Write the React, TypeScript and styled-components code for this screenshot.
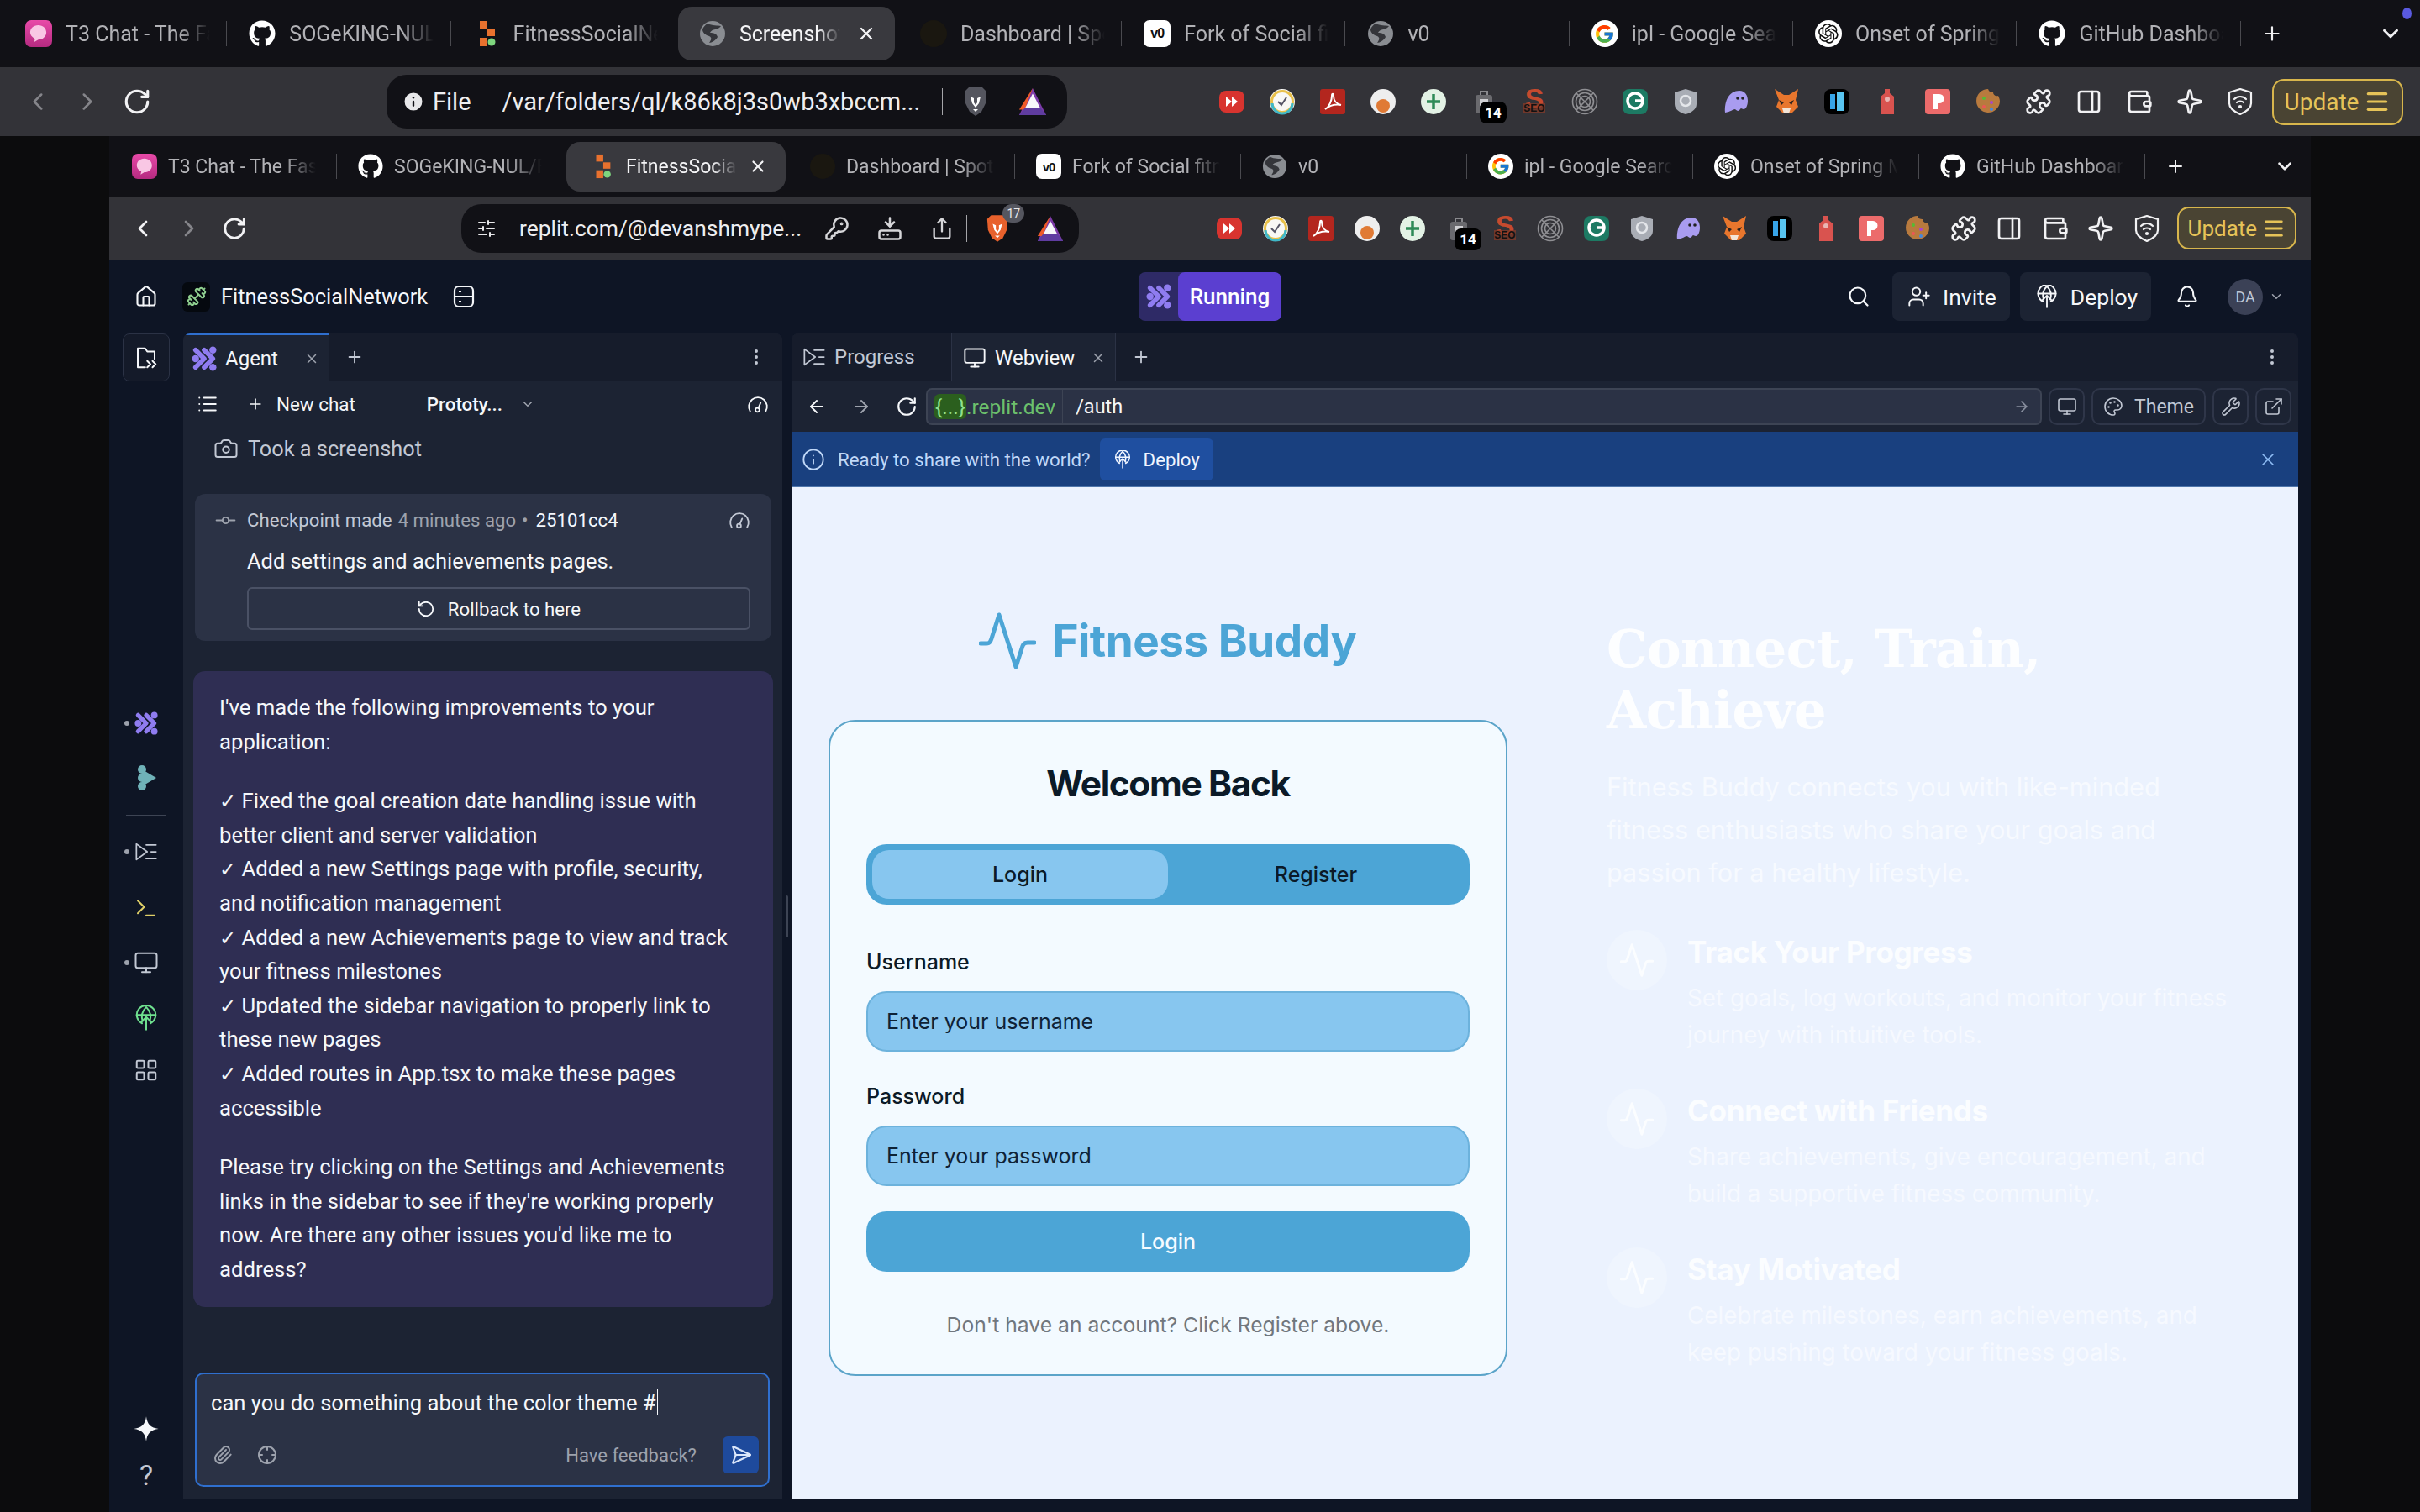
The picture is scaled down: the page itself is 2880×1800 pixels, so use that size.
import React from 'react';
import styled, { createGlobalStyle } from 'styled-components';
import {
  ArrowLeft, ArrowRight, Camera, ChevronDown, ChevronLeft, ChevronRight, Dumbbell, EllipsisVertical,
  ExternalLink, GitCommitHorizontal, HardDriveDownload, Home, Info, KeyRound, LayoutGrid, List, Menu,
  Monitor, Palette, PanelRight, Paperclip, Plus, Puzzle, RotateCcw, RotateCw, Search, SendHorizontal, Share,
  SlidersHorizontal, Sparkle, Terminal, UserPlus, Wallet, Wrench, X, Bell, Crosshair,
} from 'lucide-react';
import { FaGithub } from 'react-icons/fa';
import { FcGoogle } from 'react-icons/fc';
import { SiOpenai } from 'react-icons/si';

const UI_FONT = `Roboto, 'Noto Sans', sans-serif`;
const APP_FONT = `Inter, 'Liberation Sans', sans-serif`;

const GlobalStyle = createGlobalStyle`
  html, body { margin: 0; padding: 0; background: #0c0c0d; }
  * { box-sizing: border-box; }
`;

const Page = styled.div`
  width: 2880px;
  height: 1800px;
  overflow: hidden;
  display: flex;
  flex-direction: column;
  background: #0c0c0d;
  font-family: ${UI_FONT};
  color: #f5f7fa;
`;

/* ---- browser chrome ---- */

const TabStrip = styled.div<{ $nested?: boolean }>`
  display: flex;
  align-items: center;
  flex: none;
  height: ${(p) => (p.$nested ? 72 : 80)}px;
  padding-left: ${(p) => (p.$nested ? 2 : 4)}px;
  background: #111116;
`;

const TabCell = styled.div<{ $nested?: boolean; $active?: boolean; $noSep?: boolean }>`
  position: relative;
  flex: none;
  display: flex;
  align-items: center;
  width: ${(p) => (p.$nested ? 269 : 266.3)}px;
  height: ${(p) => (p.$nested ? 59 : 64)}px;
  padding-left: ${(p) => (p.$nested ? 25 : 26)}px;
  gap: ${(p) => (p.$nested ? 13 : 16)}px;
  border-radius: 16px;
  ${(p) => p.$active && `
    background: #39393e;
    margin: 0 4px;
    width: ${p.$nested ? 261 : 258}px;
    padding-left: ${p.$nested ? 28 : 25}px;
  `}
  ${(p) => !p.$active && !p.$noSep && `
    &::after {
      content: '';
      position: absolute;
      right: 0;
      top: 50%;
      height: 30px;
      margin-top: -15px;
      border-right: 1px solid #4a4a4f;
    }
  `}
`;

const TabTitle = styled.span<{ $nested?: boolean; $active?: boolean }>`
  flex: none;
  width: ${(p) => (p.$active ? (p.$nested ? 132 : 120) : p.$nested ? 176 : 172)}px;
  overflow: hidden;
  white-space: nowrap;
  font-family: ${UI_FONT};
  font-size: ${(p) => (p.$nested ? 23 : 25)}px;
  color: ${(p) => (p.$active ? '#f4f4f6' : '#b2b2b6')};
  mask-image: linear-gradient(90deg, #000 78%, transparent 100%);
`;

const TabClose = styled.span`
  position: absolute;
  right: 22px;
  top: 50%;
  transform: translateY(-50%);
  display: flex;
  color: #f4f4f6;
`;

const Favicon = styled.span<{ $size: number; $bg?: string; $round?: boolean }>`
  flex: none;
  display: flex;
  align-items: center;
  justify-content: center;
  width: ${(p) => p.$size}px;
  height: ${(p) => p.$size}px;
  border-radius: ${(p) => (p.$round ? '50%' : '7px')};
  background: ${(p) => p.$bg ?? 'transparent'};
  overflow: hidden;
`;

const V0Mark = styled.span<{ $size: number }>`
  font-family: 'Liberation Sans', sans-serif;
  font-weight: 700;
  font-size: ${(p) => p.$size * 0.5}px;
  color: #111;
  letter-spacing: -1px;
`;

const StripEnd = styled.div<{ $nested?: boolean }>`
  flex: 1;
  position: relative;
  display: flex;
  align-items: center;
  justify-content: space-between;
  padding: 0 ${(p) => (p.$nested ? 18 : 20)}px 0 24px;
  color: #f0f0f2;
`;

const ProfileDot = styled.span`
  position: absolute;
  right: 10px;
  top: -16px;
  width: 11px;
  height: 14px;
  border-radius: 50%;
  background: #5a5ae0;
`;

const NavBar = styled.div<{ $nested?: boolean }>`
  flex: none;
  display: flex;
  align-items: center;
  height: ${(p) => (p.$nested ? 75 : 82)}px;
  background: #333338;
  padding-left: ${(p) => (p.$nested ? 24 : 28)}px;
`;

const NavButtons = styled.div<{ $nested?: boolean }>`
  display: flex;
  align-items: center;
  gap: ${(p) => (p.$nested ? 23 : 25)}px;
  width: ${(p) => (p.$nested ? 395 : 432)}px;
`;

const NavIcon = styled.span<{ $dim?: boolean }>`
  display: flex;
  color: ${(p) => (p.$dim ? '#85858a' : '#f2f2f4')};
`;

const AddressBar = styled.div<{ $nested?: boolean }>`
  flex: none;
  display: flex;
  align-items: center;
  width: ${(p) => (p.$nested ? 735 : 810)}px;
  height: ${(p) => (p.$nested ? 58 : 64)}px;
  margin-right: ${(p) => (p.$nested ? 163 : 180)}px;
  padding-left: 18px;
  border-radius: 24px;
  background: #111116;
  color: #e8e8ea;
`;

const AddressText = styled.span<{ $ml?: number; $nested?: boolean }>`
  flex: none;
  margin-left: ${(p) => p.$ml ?? 0}px;
  white-space: nowrap;
  font-size: ${(p) => (p.$nested ? 26.4 : 29)}px;
  font-family: ${UI_FONT};
  color: #eeeef0;
`;

const AddressDivider = styled.span<{ $ml: number }>`
  flex: none;
  height: 32px;
  margin-left: ${(p) => p.$ml}px;
  border-left: 1px solid #a5a5a9;
`;

const AddressSlot = styled.span<{ $ml: number }>`
  position: relative;
  flex: none;
  display: flex;
  margin-left: ${(p) => p.$ml}px;
  color: #d6d6d9;
`;

const ShieldBadge = styled.span`
  position: absolute;
  top: -12px;
  right: -18px;
  width: 26px;
  height: 22px;
  border-radius: 11px;
  background: #55565f;
  color: #e8e8ea;
  font-size: 14px;
  text-align: center;
  line-height: 22px;
`;

const Extensions = styled.div<{ $nested?: boolean }>`
  flex: none;
  display: flex;
  align-items: center;
  gap: ${(p) => (p.$nested ? 22.6 : 28)}px;
`;

const ExtSlot = styled.span`
  position: relative;
  flex: none;
  display: flex;
  width: 32px;
  height: 32px;
  align-items: center;
  justify-content: center;
  color: #f2f2f4;
`;

const CountBadge = styled.span`
  position: absolute;
  left: 11px;
  top: 16px;
  width: 32px;
  height: 26px;
  border-radius: 8px;
  background: #000;
  color: #fff;
  font-size: 17px;
  font-weight: 700;
  text-align: center;
  line-height: 26px;
`;

const UpdateButton = styled.div<{ $nested?: boolean }>`
  flex: none;
  display: flex;
  align-items: center;
  justify-content: center;
  gap: 6px;
  width: ${(p) => (p.$nested ? 142 : 156)}px;
  height: ${(p) => (p.$nested ? 51 : 55)}px;
  margin-left: ${(p) => (p.$nested ? 20 : 22)}px;
  border: 2px solid #d8b64c;
  border-radius: 14px;
  background: #4a4433;
  color: #e6c358;
  font-size: ${(p) => (p.$nested ? 26 : 28)}px;
`;

/* ---- nested browser frame ---- */

const Frame = styled.div`
  flex: 1;
  min-height: 0;
  display: flex;
  flex-direction: column;
  margin: 0 130px;
  background: #0e1525;
`;

/* ---- replit header ---- */

const Header = styled.header`
  flex: none;
  display: flex;
  align-items: center;
  height: 88px;
  padding-left: 30px;
  background: #0e1525;
`;

const HeaderLeft = styled.div`
  display: flex;
  align-items: center;
  width: 1195px;
`;

const ReplIcon = styled.span`
  flex: none;
  display: flex;
  align-items: center;
  justify-content: center;
  width: 33px;
  height: 35px;
  margin-left: 29px;
  border-radius: 6px;
  background: #05090f;
`;

const ReplName = styled.span`
  margin: 0 30px 0 13px;
  font-size: 25.4px;
  color: #f5f7fa;
  white-space: nowrap;
`;

const RunGroup = styled.div`
  flex: none;
  display: flex;
  height: 58px;
  border-radius: 8px;
  overflow: hidden;
  background: #2e2a66;
`;

const RunIcon = styled.span`
  display: flex;
  align-items: center;
  justify-content: center;
  width: 47px;
`;

const RunLabel = styled.span`
  display: flex;
  align-items: center;
  justify-content: center;
  width: 123px;
  border-radius: 8px;
  background: #5b3fd0;
  font-size: 26px;
  font-weight: 500;
  color: #fff;
`;

const HeaderRight = styled.div`
  flex: 1;
  display: flex;
  align-items: center;
  padding-left: 673px;
  color: #f5f7fa;
`;

const HeaderButton = styled.div<{ $ml?: number }>`
  display: flex;
  align-items: center;
  gap: 14px;
  height: 58px;
  margin: 0 12px 0 ${(p) => p.$ml ?? 0}px;
  padding: 0 16px 0 18px;
  border-radius: 8px;
  background: #1c2333;
  font-size: 26.5px;
  color: #f5f7fa;
`;

const BellSlot = styled.span`
  display: flex;
  margin-left: 17px;
`;

const Avatar = styled.span`
  display: flex;
  align-items: center;
  justify-content: center;
  width: 42px;
  height: 43px;
  margin: 0 7px 0 34px;
  border-radius: 50%;
  background: #3b4156;
  color: #c2c8d4;
  font-size: 18px;
`;

/* ---- workspace ---- */

const Workspace = styled.div`
  flex: 1;
  min-height: 0;
  display: grid;
  grid-template-columns: 88px 713px 11px 1793px;
  padding: 0 15px 15px 0;
`;

const Rail = styled.nav`
  display: flex;
  flex-direction: column;
  align-items: center;
`;

const RailTop = styled.span`
  display: flex;
  align-items: center;
  justify-content: center;
  width: 56px;
  height: 57px;
  margin-bottom: 387px;
  border-radius: 8px;
  border: 1px solid #2b3245;
  background: #141a29;
  color: #f5f7fa;
`;

const RailItem = styled.span<{ $gapTop?: number; $dot?: boolean; $color?: string }>`
  position: relative;
  display: flex;
  align-items: center;
  justify-content: center;
  width: 40px;
  height: 40px;
  margin-top: ${(p) => p.$gapTop ?? 0}px;
  color: ${(p) => p.$color ?? '#c2c8d4'};
  ${(p) => p.$dot && `
    &::before {
      content: '';
      position: absolute;
      left: -6px;
      top: 17px;
      width: 6px;
      height: 6px;
      border-radius: 50%;
      background: #9da2ad;
    }
  `}
`;

const RailRule = styled.span`
  width: 48px;
  margin-top: 24px;
  border-top: 1px solid #3d4454;
`;

const RailBottom = styled.div`
  margin-top: auto;
  display: flex;
  flex-direction: column;
  align-items: center;
  gap: 19px;
  padding-bottom: 9px;
  color: #f5f7fa;
`;

const HelpMark = styled.span`
  font-size: 34px;
  color: #c2c8d4;
  font-family: ${UI_FONT};
`;

const Panel = styled.section`
  display: flex;
  flex-direction: column;
  min-height: 0;
  overflow: hidden;
  border-radius: 8px 8px 0 0;
  background: #1c2333;
`;

const PanelTabs = styled.div`
  flex: none;
  display: flex;
  align-items: stretch;
  height: 57px;
  background: #161c2b;
  border-bottom: 1px solid #2b3245;
`;

const PanelTab = styled.div<{ $width: number; $active?: boolean; $pl: number; $accent?: boolean }>`
  position: relative;
  flex: none;
  display: flex;
  align-items: center;
  gap: 10px;
  width: ${(p) => p.$width}px;
  padding-left: ${(p) => p.$pl}px;
  margin-bottom: ${(p) => (p.$active ? -1 : 0)}px;
  background: ${(p) => (p.$active ? '#1c2333' : 'transparent')};
  border-right: 1px solid #2b3245;
  border-top: ${(p) => (p.$accent ? '2px solid #2f6fcf' : 'none')};
  font-size: 24px;
  color: ${(p) => (p.$active ? '#f5f7fa' : '#c2c8d4')};
`;

const TabX = styled.span`
  position: absolute;
  right: 11px;
  top: 50%;
  transform: translateY(-50%);
  display: flex;
  color: #9da2ad;
`;

const PanelTabTail = styled.div`
  flex: 1;
  display: flex;
  align-items: center;
  justify-content: space-between;
  padding: 0 19px;
  color: #c2c8d4;
`;

const ChatToolbar = styled.div`
  flex: none;
  display: flex;
  align-items: center;
  height: 54px;
  padding: 0 16px;
  font-size: 22.4px;
  color: #f5f7fa;
`;

const ModePicker = styled.span`
  display: flex;
  align-items: center;
  gap: 21px;
  margin-left: 85px;
  font-weight: 500;
`;

const ToolbarEnd = styled.span`
  margin-left: auto;
  display: flex;
`;

const NewChat = styled.span`
  display: flex;
  align-items: center;
  gap: 15px;
  margin-left: 34px;
`;

const ActionLine = styled.div`
  flex: none;
  display: flex;
  align-items: center;
  gap: 11px;
  height: 52px;
  margin-bottom: 28px;
  padding-left: 36px;
  font-size: 25.3px;
  color: #c2c8d4;
`;

const Checkpoint = styled.div`
  flex: none;
  display: flex;
  flex-direction: column;
  height: 175px;
  margin: 0 13px 0 14px;
  padding: 14px 25px 0 22px;
  border-radius: 12px;
  background: #2b3245;
`;

const CheckpointHead = styled.div`
  display: flex;
  align-items: center;
  gap: 9px;
  height: 34px;
  font-size: 22.2px;
  color: #c2c8d4;
`;

const CommitIcon = styled.span`
  display: flex;
  margin-right: 2px;
  color: #9da2ad;
`;

const Faint = styled.span`
  margin-left: -2px;
  color: #9da2ad;
`;

const CommitId = styled.span`
  color: #f5f7fa;
`;

const CheckpointNote = styled.div`
  margin: 14px 0 0 40px;
  font-size: 25.4px;
  line-height: 36px;
  color: #f5f7fa;
`;

const RollbackButton = styled.div`
  display: flex;
  align-items: center;
  justify-content: center;
  gap: 15px;
  height: 51px;
  margin: 13px 0 0 40px;
  border: 2px solid #4a5165;
  border-radius: 6px;
  font-size: 22.2px;
  color: #f5f7fa;
`;

const AgentMessage = styled.div`
  flex: none;
  margin: 36px 11px 0 12px;
  padding: 23px 44px 25px 31px;
  height: 757px;
  border-radius: 14px;
  background: #2f2e53;
  font-size: 25.7px;
  line-height: 40.6px;
  color: #f5f7fa;
`;

const MessagePara = styled.p`
  margin: 0 0 30px;
  &:last-child { margin-bottom: 0; }
`;

const CheckMark = styled.span`
  font-family: 'DejaVu Sans', sans-serif;
  font-size: 24px;
  font-weight: 700;
  line-height: 0;
`;

const Composer = styled.div`
  flex: none;
  display: flex;
  flex-direction: column;
  height: 136px;
  margin: 78px 15px 0 14px;
  padding: 18px 11px 14px 17px;
  border: 2px solid #2f6fcf;
  border-radius: 10px;
  background: #2b3245;
  font-size: 25.6px;
  color: #f5f7fa;
`;

const Caret = styled.span`
  display: inline-block;
  width: 1px;
  height: 30px;
  margin-left: 1px;
  vertical-align: -5px;
  background: #f5f7fa;
`;

const ComposerFoot = styled.div`
  margin-top: auto;
  display: flex;
  align-items: center;
  gap: 29px;
  padding-left: 2px;
  color: #9da2ad;
`;

const Feedback = styled.span`
  margin-left: auto;
  font-size: 22px;
  color: #9da2ad;
`;

const SendButton = styled.span`
  display: flex;
  align-items: center;
  justify-content: center;
  width: 43px;
  height: 44px;
  margin-left: 2px;
  border-radius: 6px;
  background: #1e4a9c;
  color: #dbe7fb;
`;

const Splitter = styled.div`
  display: flex;
  align-items: center;
  padding-left: 4px;
  &::before {
    content: '';
    width: 3px;
    height: 50px;
    border-radius: 2px;
    background: #3d4454;
  }
`;

/* ---- webview ---- */

const UrlRow = styled.div`
  flex: none;
  display: flex;
  align-items: center;
  height: 60px;
  padding: 0 8px 0 18px;
  background: #1c2333;
  color: #f5f7fa;
`;

const UrlNav = styled.div`
  display: flex;
  align-items: center;
  gap: 29px;
  width: 142px;
`;

const UrlBox = styled.div`
  flex: none;
  display: flex;
  align-items: center;
  width: 1328px;
  height: 44px;
  padding-left: 8px;
  border: 2px solid #3d4454;
  border-radius: 7px;
  background: #2b3245;
  font-size: 24.5px;
`;

const UrlHost = styled.span`
  display: flex;
  align-items: center;
  height: 100%;
  padding-right: 8px;
  border-right: 1px solid #3d4454;
  color: #6cc06c;
`;

const HostBadge = styled.span`
  display: flex;
  align-items: center;
  height: 30px;
  padding: 0 1px;
  border-radius: 6px;
  background: #2b5f1e;
  color: #8fe08f;
`;

const UrlPath = styled.span`
  margin-left: 15px;
  font-size: 23.5px;
  color: #f5f7fa;
`;

const UrlGo = styled.span`
  margin-left: auto;
  margin-right: 12px;
  display: flex;
  color: #8a90a0;
`;

const ToolButton = styled.span`
  flex: none;
  display: flex;
  align-items: center;
  justify-content: center;
  gap: 13px;
  width: 43px;
  height: 44px;
  margin-left: 8px;
  border: 2px solid #2f3649;
  border-radius: 10px;
  background: #1c2333;
  color: #c2c8d4;
  font-size: 23px;
`;

const ThemeButton = styled(ToolButton)`
  width: 136px;
`;

const Banner = styled.div`
  flex: none;
  display: flex;
  align-items: center;
  height: 66px;
  padding: 0 24px 0 12px;
  background: #19407f;
  border-bottom: 1px solid #4f76ab;
  color: #c0d8f8;
  font-size: 22.2px;
`;

const BannerDeploy = styled.span`
  display: flex;
  align-items: center;
  gap: 14px;
  height: 50px;
  margin-left: 11px;
  padding: 0 16px;
  border-radius: 6px;
  background: #1f4fa0;
  color: #f0f5ff;
`;

const BannerText = styled.span`
  margin-left: 15px;
`;

const BannerClose = styled.span`
  margin-left: auto;
  display: flex;
  color: #8fbdf5;
`;

const Preview = styled.div`
  flex: 1;
  min-height: 0;
  display: flex;
  padding: 0 0 0 44px;
  background: #ebf2fe;
  font-family: ${APP_FONT};
`;

const LoginColumn = styled.div`
  flex: none;
  display: flex;
  flex-direction: column;
  width: 808px;
`;

const Brand = styled.div`
  display: flex;
  align-items: center;
  justify-content: center;
  gap: 19px;
  height: 68px;
  margin: 149px 0 60px;
  color: #4ca5d6;
`;

const BrandName = styled.span`
  font-size: 53px;
  font-weight: 700;
  letter-spacing: -0.5px;
  white-space: nowrap;
  color: #4ca5d6;
`;

const Card = styled.div`
  display: flex;
  flex-direction: column;
  height: 781px;
  padding: 0 43px;
  border: 2px solid #5ba4c9;
  border-radius: 32px;
  background: #f3faff;
  color: #0b1a28;
`;

const CardTitle = styled.h2`
  margin: 47px 0 0;
  height: 54px;
  line-height: 54px;
  text-align: center;
  font-size: 42.5px;
  font-weight: 700;
  letter-spacing: -1.4px;
`;

const Segments = styled.div`
  display: grid;
  grid-template-columns: 1fr 1fr;
  height: 72px;
  margin-top: 45px;
  padding: 7px;
  border-radius: 24px;
  background: #4ca5d6;
`;

const Segment = styled.div<{ $active?: boolean }>`
  display: flex;
  align-items: center;
  justify-content: center;
  border-radius: 20px;
  background: ${(p) => (p.$active ? '#87c6ef' : 'transparent')};
  font-size: 25px;
  font-weight: 500;
  color: #0b1a28;
`;

const FieldLabel = styled.label<{ $mt: number }>`
  display: block;
  margin-top: ${(p) => p.$mt}px;
  height: 35px;
  line-height: 35px;
  font-size: 25px;
  font-weight: 500;
`;

const FieldInput = styled.div`
  display: flex;
  align-items: center;
  height: 72px;
  margin-top: 17px;
  padding-left: 22px;
  border: 2px solid #6cb2dc;
  border-radius: 24px;
  background: #87c6ef;
  font-size: 25px;
  color: #0e2236;
`;

const SubmitButton = styled.div`
  display: flex;
  align-items: center;
  justify-content: center;
  height: 72px;
  margin-top: 30px;
  border-radius: 24px;
  background: #4ca5d6;
  color: #f5fbff;
  font-size: 25px;
  font-weight: 500;
`;

const CardFoot = styled.p`
  margin: 45px 0 0;
  text-align: center;
  font-size: 24.7px;
  line-height: 36px;
  color: #71777e;
`;

const Hero = styled.div`
  flex: none;
  width: 800px;
  margin-left: 118px;
  padding-top: 156px;
  color: #fafcff;
`;

const HeroTitle = styled.h1`
  margin: 0;
  width: 640px;
  font-family: 'DejaVu Serif', serif;
  font-size: 61px;
  font-weight: 700;
  line-height: 73px;
  letter-spacing: -0.6px;
  color: #fdfeff;
`;

const HeroLead = styled.p`
  margin: 29px 0 0;
  width: 680px;
  font-size: 30.7px;
  line-height: 51px;
  color: #f7faff;
`;

const Feature = styled.div`
  display: flex;
  gap: 24px;
  height: 189px;
`;

const FeatureList = styled.div`
  margin-top: 43px;
`;

const FeatureBadge = styled.span`
  flex: none;
  display: flex;
  align-items: center;
  justify-content: center;
  width: 72px;
  height: 72px;
  border-radius: 50%;
  background: #eff5fe;
  color: #fbfdff;
`;

const FeatureBody = styled.div`
  width: 660px;
`;

const FeatureTitle = styled.h3`
  margin: 0;
  font-size: 35px;
  font-weight: 700;
  letter-spacing: -0.3px;
  line-height: 52px;
  color: #fbfdff;
`;

const FeatureText = styled.p`
  margin: 7px 0 0;
  font-size: 27.8px;
  line-height: 44px;
  color: #f6f9ff;
`;

/* ---- drawings ---- */

const AgentGlyph = ({ size, color = '#8f7cf0' }: { size: number; color?: string }) => (
  <svg width={size} height={size} viewBox="0 0 32 32" fill={color} stroke={color} strokeLinecap="round" strokeLinejoin="round">
    <path d="M5 5 16 16 5 27M16 5 27 16 16 27" fill="none" strokeWidth="6" />
    <circle cx="5" cy="16" r="4.5" strokeWidth="0" />
    <circle cx="27" cy="5" r="4.5" strokeWidth="0" />
    <circle cx="27" cy="27" r="4.5" strokeWidth="0" />
  </svg>
);

const RunnerGlyph = () => (
  <svg width="28" height="32" viewBox="0 0 28 32" fill="#6fb2b8">
    <circle cx="9" cy="6" r="5" />
    <circle cx="9" cy="16" r="5" />
    <circle cx="9" cy="26" r="5" />
    <path d="M9 6 26 16 9 26z" />
  </svg>
);

const PulseGlyph = ({ width, height, weight }: { width: number; height: number; weight: number }) => (
  <svg width={width} height={height} viewBox="0 0 68 68" fill="none" stroke="currentColor" strokeWidth={weight} strokeLinecap="round" strokeLinejoin="round">
    <path d="M2 37h7c4 0 5-2 7-9l8-25 20 62 8-25c1-3 3-4 6-4h8" />
  </svg>
);

const DeployGlyph = ({ size }: { size: number }) => (
  <svg width={size} height={size} viewBox="0 0 24 24" fill="none" stroke="currentColor" strokeWidth="1.6" strokeLinecap="round" strokeLinejoin="round">
    <path d="M8 17a9 9 0 1 1 8 0" />
    <path d="M8.5 15C7 10 8.5 5 12 1.500 15.500 5 17 10 15.500 15" />
    <path d="M3 9h18" />
    <path d="M12 23V11M7.500 15.500 12 11l4.500 4.500" />
  </svg>
);

const ProgressGlyph = ({ size }: { size: number }) => (
  <svg width={size} height={size} viewBox="0 0 24 24" fill="none" stroke="currentColor" strokeWidth="1.5" strokeLinejoin="round" strokeLinecap="round">
    <path d="M2 4v16l11-8z" />
    <path d="M12 5h10M17 12h5M12 19h10" />
  </svg>
);

const FolderGlyph = () => (
  <svg width="30" height="30" viewBox="0 0 24 24" fill="none" stroke="currentColor" strokeWidth="1.6" strokeLinecap="round" strokeLinejoin="round">
    <path d="M11 21H4V3h7l2 3h7v7" />
    <path d="m13 15 3 3-3 3M18 15l3 3-3 3" />
  </svg>
);

const MeterGlyph = ({ size }: { size: number }) => (
  <svg width={size} height={size} viewBox="0 0 24 24" fill="none" stroke="currentColor" strokeWidth="1.7" strokeLinecap="round">
    <path d="M3.500 20A10 10 0 1 1 20.500 20" />
    <circle cx="11.500" cy="18.500" r="2.200" />
    <path d="M12.500 16.500 15 10.500" />
  </svg>
);

const FourPointStar = () => (
  <svg width="32" height="32" viewBox="0 0 24 24" fill="currentColor">
    <path d="M12 1c.9 7 4 10.100 11 11-7 .9-10.100 4-11 11-.9-7-4-10.100-11-11 7-.9 10.100-4 11-11z" />
  </svg>
);

const BraveLion = ({ bg, w, h }: { bg: string; w: number; h: number }) => (
  <svg width={w} height={h} viewBox="0 0 30 36">
    <path d="M7 1h16l5 5-1 14-5 10-7 5-7-5-5-10L2 6z" fill={bg} />
    <path d="M9 12l4 2v5l2 3 2-3v-5l4-2-2 8-4 5-4-5z" fill="#fff" />
    <path d="M12 27h6l-3 3z" fill="#fff" />
  </svg>
);

const AuroraTriangle = ({ w, h }: { w: number; h: number }) => (
  <svg width={w} height={h} viewBox="0 0 36 36">
    <path d="M18 1 35 35H1z" fill="#7c3aa8" />
    <path d="M18 1 1 28 8 28z" fill="#ef5a28" />
    <path d="M18 8 28 27H8z" fill="#f7f7fa" />
    <path d="M1 35l7-9h20l7 9z" fill="#5f3ca0" />
  </svg>
);

const FitnessLogo = ({ size }: { size: number }) => (
  <svg width={size} height={size} viewBox="0 0 32 32">
    <rect x="8" y="1" width="9" height="9" fill="#e8712e" />
    <rect x="17" y="11" width="9" height="8" fill="#e8712e" />
    <rect x="8" y="21" width="9" height="10" fill="#e8712e" />
    <circle cx="22" cy="26" r="4.5" fill="#7ed67e" />
  </svg>
);

const GlobeSwirl = ({ size }: { size: number }) => (
  <svg width={size} height={size} viewBox="0 0 32 32">
    <circle cx="16" cy="16" r="15" fill="#8a8d92" />
    <path d="M10 4c6 3 12 2 16 3-3 5-11 3-13 8 4 0 8 1 9 5-2 4-7 7-10 7 2-3 4-6 0-8-4-1-8-4-8-8 1-3 3-5 6-7z" fill="#34353a" />
  </svg>
);

const T3Logo = ({ size }: { size: number }) => (
  <Favicon $size={size} $bg="linear-gradient(#e84aa8, #b52a80)">
    <svg width={size * 0.72} height={size * 0.72} viewBox="0 0 24 24">
      <path d="M12 2c6 0 10 4 10 9s-4 9-10 9l-5 3 1-4c-4-2-6-5-6-8 0-5 4-9 10-9z" fill="#f9c7e4" />
    </svg>
  </Favicon>
);

const TabIcon = ({ kind, size }: { kind: string; size: number }) => {
  switch (kind) {
    case 't3':
      return <T3Logo size={size} />;
    case 'github':
      return <FaGithub size={size} color="#fff" />;
    case 'fitness':
      return <FitnessLogo size={size} />;
    case 'globe':
      return <GlobeSwirl size={size} />;
    case 'spotify':
      return <Favicon $size={size} $bg="#1a1710" $round />;
    case 'v0':
      return (
        <Favicon $size={size} $bg="#fff">
          <V0Mark $size={size}>v0</V0Mark>
        </Favicon>
      );
    case 'google':
      return (
        <Favicon $size={size} $bg="#fff" $round>
          <FcGoogle size={size * 0.78} />
        </Favicon>
      );
    case 'openai':
      return (
        <Favicon $size={size} $bg="#fff" $round>
          <SiOpenai size={size * 0.74} color="#111" />
        </Favicon>
      );
    default:
      return null;
  }
};

const extensionIcons: React.ReactNode[] = [
  <svg key="yt" width="32" height="28" viewBox="0 0 32 28"><rect x="1" y="1" width="30" height="26" rx="8" fill="#d8342f" /><path d="M9 8l7 6-7 6zM16 8l7 6-7 6z" fill="#fff" /></svg>,
  <svg key="clock" width="32" height="32" viewBox="0 0 32 32"><circle cx="16" cy="16" r="15" fill="#f8f8f5" /><circle cx="16" cy="16" r="12.5" fill="none" stroke="#e8c04a" strokeWidth="3" /><path d="M4 18a12 12 0 0 0 24 0" fill="none" stroke="#3fb8c8" strokeWidth="3" /><path d="M11 16l4 4 6-9" fill="none" stroke="#556" strokeWidth="2" /></svg>,
  <svg key="pdf" width="32" height="32" viewBox="0 0 32 32"><rect x="1" y="1" width="30" height="30" rx="3" fill="#b3261e" /><path d="M7 25c5-3 8-10 8-16 0-3 2-3 2 0 0 6 4 10 9 11-6-1-13 0-19 5z" fill="none" stroke="#fff" strokeWidth="2" /></svg>,
  <svg key="egg" width="32" height="32" viewBox="0 0 32 32"><circle cx="16" cy="16" r="15" fill="#eeeeee" /><ellipse cx="16" cy="21" rx="8" ry="8" fill="#e07a35" /></svg>,
  <svg key="plus" width="32" height="32" viewBox="0 0 32 32"><circle cx="16" cy="16" r="15" fill="#e3f2e5" /><path d="M16 7v18M8 16h16" stroke="#2e8b57" strokeWidth="3.5" /></svg>,
  <svg key="bag" width="32" height="32" viewBox="0 0 32 32"><path d="M12 4h8v5h-8z" fill="none" stroke="#8a8a8e" strokeWidth="2" /><rect x="6" y="8" width="20" height="22" rx="3" fill="#6a6a6e" /><rect x="11" y="13" width="10" height="8" fill="#cfcfd2" /></svg>,
  <svg key="seo" width="32" height="34" viewBox="0 0 32 34"><text x="16" y="25" textAnchor="middle" fontFamily="'Liberation Sans', sans-serif" fontWeight="700" fontSize="34" fill="#c64a2e">S</text><rect x="3" y="19" width="26" height="12" fill="#8a3a28" opacity="0.7" /><text x="16" y="29" textAnchor="middle" fontFamily="'Liberation Sans', sans-serif" fontWeight="700" fontSize="12" fill="#111">SEO</text></svg>,
  <svg key="rings" width="32" height="32" viewBox="0 0 32 32" fill="none" stroke="#8f8f93" strokeWidth="1.6"><circle cx="16" cy="16" r="14.5" /><circle cx="16" cy="16" r="10.5" /><circle cx="16" cy="16" r="6.5" /><path d="M6 6l20 20M26 6 6 26" /></svg>,
  <svg key="g" width="32" height="32" viewBox="0 0 32 32"><rect x="1" y="1" width="30" height="30" rx="8" fill="#1d7a63" /><circle cx="16" cy="15" r="9" fill="none" stroke="#fff" strokeWidth="3.5" /><path d="M16 15h9" stroke="#fff" strokeWidth="3.5" /></svg>,
  <svg key="shield" width="30" height="32" viewBox="0 0 30 32"><path d="M15 1 28 5v14c0 6-6 10-13 12C8 29 2 25 2 19V5z" fill="#a9adb5" /><circle cx="15" cy="15" r="6" fill="none" stroke="#e4e6ea" strokeWidth="2.5" /></svg>,
  <svg key="ghost" width="32" height="30" viewBox="0 0 32 30"><path d="M3 28C2 14 8 2 20 2c7 0 10 6 10 12 0 5-2 10-5 10-2 0-3-2-4 0-2 3-4 2-6 0-3 0-5 3-12 4z" fill="#a99cf0" /><circle cx="18" cy="11" r="1.8" fill="#222" /><circle cx="24" cy="11" r="1.8" fill="#222" /></svg>,
  <svg key="fox" width="32" height="32" viewBox="0 0 32 32"><path d="M2 1l11 7h6l11-7-3 13 3 8-8 8h-10l-8-8 3-8z" fill="#e8762d" /><path d="M11 24h10l-2 6h-6z" fill="#f3e5d8" /><path d="M7 14l6 3-3 3zM25 14l-6 3 3 3z" fill="#2b2320" /></svg>,
  <svg key="blue" width="32" height="32" viewBox="0 0 32 32"><rect x="1" y="1" width="30" height="30" rx="8" fill="#000" /><rect x="8" y="7" width="6" height="18" fill="#37a4e8" /><rect x="16" y="5" width="8" height="22" fill="#58c4f0" /></svg>,
  <svg key="bottle" width="28" height="32" viewBox="0 0 28 32"><path d="M11 1h6v5l5 4v21H6V10l5-4z" fill="#d9534f" /><circle cx="14" cy="13" r="3" fill="#e9b6b4" /></svg>,
  <svg key="p" width="32" height="32" viewBox="0 0 32 32"><rect x="1" y="1" width="30" height="30" rx="4" fill="#ec6b6b" /><path d="M11 25V7h7a5 5 0 0 1 0 11h-2v7z" fill="#fff" /></svg>,
  <svg key="cookie" width="32" height="32" viewBox="0 0 32 32"><path d="M16 1c1 3 3 4 6 4 0 3 3 5 6 4 1 2 2 4 2 7a14 14 0 1 1-14-15z" fill="#b87a3e" /><circle cx="11" cy="12" r="2" fill="#5b3" /><circle cx="20" cy="17" r="2" fill="#a4c" /><circle cx="11" cy="22" r="2" fill="#e55" /><circle cx="20" cy="25" r="2" fill="#48d" /></svg>,
  <Puzzle key="puzzle" size={32} strokeWidth={2} />,
  <PanelRight key="panel" size={32} strokeWidth={2} />,
  <Wallet key="wallet" size={32} strokeWidth={2} />,
  <Sparkle key="sparkle" size={32} strokeWidth={2} />,
  <svg key="vpn" width="30" height="32" viewBox="0 0 30 32" fill="none" stroke="currentColor" strokeWidth="2.2" strokeLinecap="round"><path d="M15 1 28 5v13c0 6-6 10-13 13C8 28 2 24 2 18V5z" /><path d="M8 13c4-4 10-4 14 0M11 17c2-2 6-2 8 0" /><circle cx="15" cy="22" r="1" /></svg>,
];

type BrowserTab = { kind: string; title: string; active?: boolean };

const outerTabs: BrowserTab[] = [
  { kind: 't3', title: 'T3 Chat - The Fastest' },
  { kind: 'github', title: 'SOGeKING-NUL/Fitness' },
  { kind: 'fitness', title: 'FitnessSocialNetwork' },
  { kind: 'globe', title: 'Screenshot', active: true },
  { kind: 'spotify', title: 'Dashboard | Spotify' },
  { kind: 'v0', title: 'Fork of Social fitness' },
  { kind: 'globe', title: 'v0' },
  { kind: 'google', title: 'ipl - Google Search' },
  { kind: 'openai', title: 'Onset of Spring Maps' },
  { kind: 'github', title: 'GitHub Dashboard' },
];

const nestedTabs: BrowserTab[] = [
  { kind: 't3', title: 'T3 Chat - The Fastest' },
  { kind: 'github', title: 'SOGeKING-NUL/Fitness' },
  { kind: 'fitness', title: 'FitnessSocialNetwork', active: true },
  { kind: 'spotify', title: 'Dashboard | Spotify' },
  { kind: 'v0', title: 'Fork of Social fitness' },
  { kind: 'globe', title: 'v0' },
  { kind: 'google', title: 'ipl - Google Search' },
  { kind: 'openai', title: 'Onset of Spring Maps' },
  { kind: 'github', title: 'GitHub Dashboard' },
];

const TabRow = ({ tabs, nested }: { tabs: BrowserTab[]; nested?: boolean }) => {
  const icon = nested ? 30 : 32;
  return (
    <TabStrip $nested={nested}>
      {tabs.map((tab, i) => (
        <TabCell key={i} $nested={nested} $active={tab.active} $noSep={tabs[i + 1]?.active}>
          <TabIcon kind={tab.kind} size={icon} />
          <TabTitle $nested={nested} $active={tab.active}>{tab.title}</TabTitle>
          {tab.active && (
            <TabClose>
              <X size={nested ? 22 : 24} strokeWidth={2.4} />
            </TabClose>
          )}
        </TabCell>
      ))}
      <StripEnd $nested={nested}>
        <Plus size={nested ? 24 : 26} strokeWidth={2} />
        <ChevronDown size={nested ? 26 : 30} strokeWidth={2.4} />
        {!nested && <ProfileDot />}
      </StripEnd>
    </TabStrip>
  );
};

const ExtensionRow = ({ nested }: { nested?: boolean }) => (
  <>
    <Extensions $nested={nested}>
      {extensionIcons.map((icon, i) => (
        <ExtSlot key={i}>
          {icon}
          {i === 5 && <CountBadge>14</CountBadge>}
        </ExtSlot>
      ))}
    </Extensions>
    <UpdateButton $nested={nested}>
      Update <Menu size={nested ? 28 : 32} strokeWidth={2.4} />
    </UpdateButton>
  </>
);

const OuterToolbar = () => (
  <NavBar>
    <NavButtons>
      <NavIcon $dim><ChevronLeft size={34} strokeWidth={1.8} /></NavIcon>
      <NavIcon $dim><ChevronRight size={34} strokeWidth={1.8} /></NavIcon>
      <NavIcon><RotateCw size={34} strokeWidth={2.2} /></NavIcon>
    </NavButtons>
    <AddressBar>
      <Info size={28} fill="#e8e8ea" color="#111116" />
      <AddressText $ml={9}>File</AddressText>
      <AddressText $ml={37}>/var/folders/ql/k86k8j3s0wb3xbccm...</AddressText>
      <AddressDivider $ml={26} />
      <AddressSlot $ml={24}><BraveLion bg="#55565f" w={30} h={36} /></AddressSlot>
      <AddressSlot $ml={34}><AuroraTriangle w={38} h={34} /></AddressSlot>
    </AddressBar>
    <ExtensionRow />
  </NavBar>
);

const NestedToolbar = () => (
  <NavBar $nested>
    <NavButtons $nested>
      <NavIcon><ChevronLeft size={32} strokeWidth={2} /></NavIcon>
      <NavIcon $dim><ChevronRight size={32} strokeWidth={2} /></NavIcon>
      <NavIcon><RotateCw size={30} strokeWidth={2.2} /></NavIcon>
    </NavButtons>
    <AddressBar $nested>
      <SlidersHorizontal size={24} />
      <AddressText $nested $ml={27}>replit.com/@devanshmype...</AddressText>
      <AddressSlot $ml={27}><KeyRound size={30} /></AddressSlot>
      <AddressSlot $ml={33}><HardDriveDownload size={30} /></AddressSlot>
      <AddressSlot $ml={33}><Share size={28} /></AddressSlot>
      <AddressDivider $ml={15} />
      <AddressSlot $ml={22}>
        <BraveLion bg="#e8612c" w={28} h={34} />
        <ShieldBadge>17</ShieldBadge>
      </AddressSlot>
      <AddressSlot $ml={32}><AuroraTriangle w={34} h={32} /></AddressSlot>
    </AddressBar>
    <ExtensionRow nested />
  </NavBar>
);

const ReplitHeader = () => (
  <Header>
    <HeaderLeft>
      <Home size={28} strokeWidth={1.8} />
      <ReplIcon>
        <Dumbbell size={24} color="#8fcf8f" />
      </ReplIcon>
      <ReplName>FitnessSocialNetwork</ReplName>
      <svg width="26" height="28" viewBox="0 0 26 28" fill="none" stroke="currentColor" strokeWidth="2.2">
        <rect x="2" y="2" width="22" height="24" rx="5" />
        <path d="M2 14h22M7 8h3M7 20h3" />
      </svg>
    </HeaderLeft>
    <RunGroup>
      <RunIcon><AgentGlyph size={30} /></RunIcon>
      <RunLabel>Running</RunLabel>
    </RunGroup>
    <HeaderRight>
      <Search size={28} strokeWidth={1.9} />
      <HeaderButton $ml={26}>
        <UserPlus size={28} strokeWidth={1.7} /> Invite
      </HeaderButton>
      <HeaderButton>
        <DeployGlyph size={28} /> Deploy
      </HeaderButton>
      <BellSlot><Bell size={28} strokeWidth={1.8} /></BellSlot>
      <Avatar>DA</Avatar>
      <ChevronDown size={18} color="#9da2ad" />
    </HeaderRight>
  </Header>
);

const AgentPanel = () => (
  <Panel>
    <PanelTabs>
      <PanelTab $width={174} $pl={10} $active $accent>
        <AgentGlyph size={30} /> Agent
        <TabX><X size={18} /></TabX>
      </PanelTab>
      <PanelTabTail>
        <Plus size={22} />
        <EllipsisVertical size={24} />
      </PanelTabTail>
    </PanelTabs>
    <ChatToolbar>
      <List size={26} strokeWidth={1.8} />
      <NewChat>
        <Plus size={20} /> New chat
      </NewChat>
      <ModePicker>
        Prototy... <ChevronDown size={18} color="#9da2ad" />
      </ModePicker>
      <ToolbarEnd><MeterGlyph size={26} /></ToolbarEnd>
    </ChatToolbar>
    <ActionLine>
      <Camera size={30} strokeWidth={1.6} /> Took a screenshot
    </ActionLine>
    <Checkpoint>
      <CheckpointHead>
        <CommitIcon><GitCommitHorizontal size={29} strokeWidth={1.6} /></CommitIcon>
        <span>Checkpoint made</span>
        <Faint>4 minutes ago</Faint>
        <Faint>•</Faint>
        <CommitId>25101cc4</CommitId>
        <ToolbarEnd><MeterGlyph size={26} /></ToolbarEnd>
      </CheckpointHead>
      <CheckpointNote>Add settings and achievements pages.</CheckpointNote>
      <RollbackButton>
        <RotateCcw size={22} /> Rollback to here
      </RollbackButton>
    </Checkpoint>
    <AgentMessage>
      <MessagePara>I've made the following improvements to your application:</MessagePara>
      <MessagePara>
        <CheckMark>✓</CheckMark> Fixed the goal creation date handling issue with better client and server validation
        <br /><CheckMark>✓</CheckMark> Added a new Settings page with profile, security, and notification management
        <br /><CheckMark>✓</CheckMark> Added a new Achievements page to view and track your fitness milestones
        <br /><CheckMark>✓</CheckMark> Updated the sidebar navigation to properly link to these new pages
        <br /><CheckMark>✓</CheckMark> Added routes in App.tsx to make these pages accessible
      </MessagePara>
      <MessagePara>
        Please try clicking on the Settings and Achievements links in the sidebar to see if they're working properly
        now. Are there any other issues you'd like me to address?
      </MessagePara>
    </AgentMessage>
    <Composer>
      <div>
        can you do something about the color theme #<Caret />
      </div>
      <ComposerFoot>
        <Paperclip size={24} />
        <Crosshair size={24} />
        <Feedback>Have feedback?</Feedback>
        <SendButton><SendHorizontal size={26} /></SendButton>
      </ComposerFoot>
    </Composer>
  </Panel>
);

const features = [
  { title: 'Track Your Progress', text: 'Set goals, log workouts, and monitor your fitness journey with intuitive tools.' },
  { title: 'Connect with Friends', text: 'Share achievements, give encouragement, and build a supportive fitness community.' },
  { title: 'Stay Motivated', text: 'Celebrate milestones, earn achievements, and keep pushing toward your fitness goals.' },
];

const WebviewPanel = () => (
  <Panel>
    <PanelTabs>
      <PanelTab $width={191} $pl={13}>
        <ProgressGlyph size={28} /> Progress
      </PanelTab>
      <PanelTab $width={195} $pl={13} $active>
        <Monitor size={28} strokeWidth={1.6} /> Webview
        <TabX><X size={18} /></TabX>
      </PanelTab>
      <PanelTabTail>
        <Plus size={22} />
        <EllipsisVertical size={24} />
      </PanelTabTail>
    </PanelTabs>
    <UrlRow>
      <UrlNav>
        <ArrowLeft size={24} />
        <ArrowRight size={24} color="#9da2ad" />
        <RotateCw size={26} />
      </UrlNav>
      <UrlBox>
        <UrlHost>
          <HostBadge>{'{...}'}</HostBadge>.replit.dev
        </UrlHost>
        <UrlPath>/auth</UrlPath>
        <UrlGo><ArrowRight size={20} /></UrlGo>
      </UrlBox>
      <ToolButton><Monitor size={24} strokeWidth={1.6} /></ToolButton>
      <ThemeButton><Palette size={24} strokeWidth={1.6} /> Theme</ThemeButton>
      <ToolButton><Wrench size={24} strokeWidth={1.6} /></ToolButton>
      <ToolButton><ExternalLink size={24} strokeWidth={1.6} /></ToolButton>
    </UrlRow>
    <Banner>
      <Info size={28} strokeWidth={1.6} />
      <BannerText>Ready to share with the world?</BannerText>
      <BannerDeploy>
        <DeployGlyph size={22} /> Deploy
      </BannerDeploy>
      <BannerClose><X size={24} strokeWidth={1.6} /></BannerClose>
    </Banner>
    <Preview>
      <LoginColumn>
        <Brand>
          <PulseGlyph width={68} height={68} weight={5} />
          <BrandName>Fitness Buddy</BrandName>
        </Brand>
        <Card>
          <CardTitle>Welcome Back</CardTitle>
          <Segments>
            <Segment $active>Login</Segment>
            <Segment>Register</Segment>
          </Segments>
          <FieldLabel $mt={51}>Username</FieldLabel>
          <FieldInput>Enter your username</FieldInput>
          <FieldLabel $mt={36}>Password</FieldLabel>
          <FieldInput>Enter your password</FieldInput>
          <SubmitButton>Login</SubmitButton>
          <CardFoot>Don't have an account? Click Register above.</CardFoot>
        </Card>
      </LoginColumn>
      <Hero>
        <HeroTitle>Connect, Train, Achieve</HeroTitle>
        <HeroLead>
          Fitness Buddy connects you with like-minded fitness enthusiasts who share your goals and passion for a healthy lifestyle.
        </HeroLead>
        <FeatureList>
          {features.map((f) => (
            <Feature key={f.title}>
              <FeatureBadge><PulseGlyph width={40} height={40} weight={5} /></FeatureBadge>
              <FeatureBody>
                <FeatureTitle>{f.title}</FeatureTitle>
                <FeatureText>{f.text}</FeatureText>
              </FeatureBody>
            </Feature>
          ))}
        </FeatureList>
      </Hero>
    </Preview>
  </Panel>
);

export default function App() {
  return (
    <>
      <GlobalStyle />
      <Page>
        <TabRow tabs={outerTabs} />
        <OuterToolbar />
        <Frame>
          <TabRow tabs={nestedTabs} nested />
          <NestedToolbar />
          <ReplitHeader />
          <Workspace>
            <Rail>
              <RailTop><FolderGlyph /></RailTop>
              <RailItem $dot><AgentGlyph size={28} /></RailItem>
              <RailItem $gapTop={25}><RunnerGlyph /></RailItem>
              <RailRule />
              <RailItem $gapTop={23} $dot><ProgressGlyph size={28} /></RailItem>
              <RailItem $gapTop={27} $color="#e0d068"><Terminal size={30} strokeWidth={1.6} /></RailItem>
              <RailItem $gapTop={25} $dot><Monitor size={30} strokeWidth={1.6} /></RailItem>
              <RailItem $gapTop={26} $color="#6fe08f"><DeployGlyph size={30} /></RailItem>
              <RailItem $gapTop={22}><LayoutGrid size={30} strokeWidth={1.6} /></RailItem>
              <RailBottom>
                <FourPointStar />
                <HelpMark>?</HelpMark>
              </RailBottom>
            </Rail>
            <AgentPanel />
            <Splitter />
            <WebviewPanel />
          </Workspace>
        </Frame>
      </Page>
    </>
  );
}
